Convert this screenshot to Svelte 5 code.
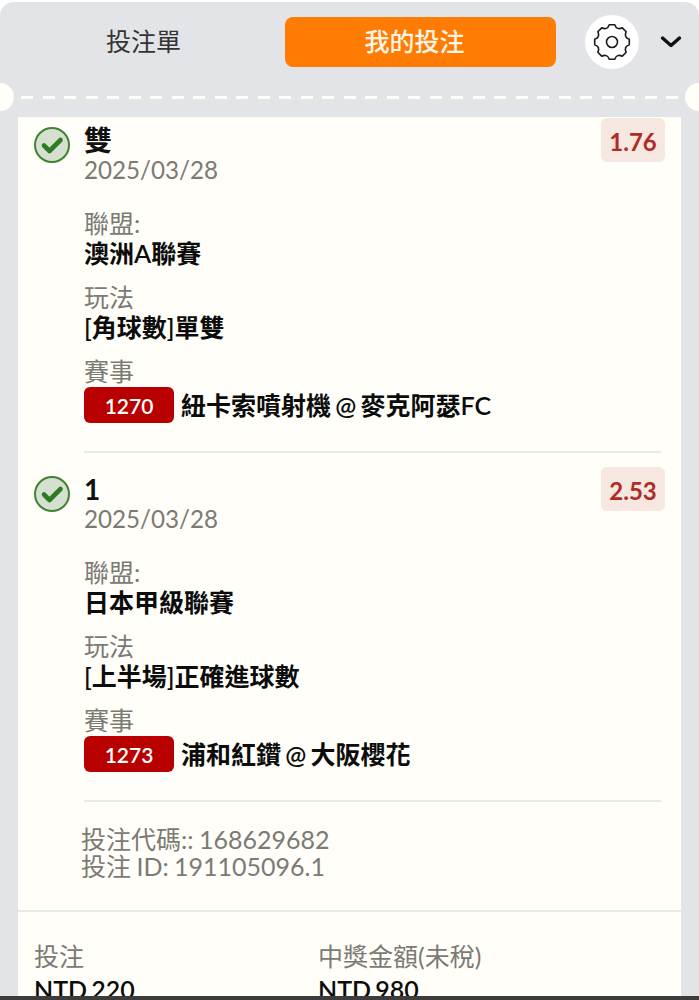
<script lang="ts">
    const bets = [
        { pick: '雙', date: '2025/03/28', odds: '1.76', league: '澳洲A聯賽', market: '[角球數]單雙', code: '1270', match: '紐卡索噴射機 @ 麥克阿瑟FC' },
        { pick: '1', date: '2025/03/28', odds: '2.53', league: '日本甲級聯賽', market: '[上半場]正確進球數', code: '1273', match: '浦和紅鑽 @ 大阪櫻花' }
    ];

    // 8-tooth gear outline, teeth joined by scooped valleys
    function gearPath(cx: number, cy: number, outer: number, valley: number): string {
        const pt = (deg: number, r: number) => {
            const a = (deg * Math.PI) / 180;
            return `${(cx + r * Math.cos(a)).toFixed(2)} ${(cy + r * Math.sin(a)).toFixed(2)}`;
        };
        let d = `M${pt(-9, outer)}`;
        for (let i = 0; i < 8; i++) {
            const a = i * 45;
            d += ` L${pt(a + 9, outer)} Q${pt(a + 22.5, valley)} ${pt(a + 36, outer)}`;
        }
        return d + 'Z';
    }

    const gear = gearPath(22, 22, 17.5, 12.5);
</script>

<div class="slip">
    <header class="tabs">
        <button class="tab">投注單</button>
        <button class="tab active">我的投注</button>
        <span class="gear">
            <svg viewBox="0 0 44 44" width="44" height="44" fill="none" stroke="#1c1c1c" stroke-width="1.6" stroke-linecap="round" stroke-linejoin="round">
                <path d={gear} />
                <circle cx="22" cy="22" r="5.500" />
            </svg>
        </span>
        <svg class="chevron" viewBox="0 0 22 14" width="22" height="14" fill="none" stroke="#111" stroke-width="3.400" stroke-linecap="round" stroke-linejoin="round">
            <path d="M2.500 3 11 10.500 19.500 3" />
        </svg>
    </header>

    <div class="perforation">
        <span class="notch left"></span>
        <span class="notch right"></span>
    </div>

    <main class="ticket">
        {#each bets as bet}
            <section class="bet">
                <span class="check">
                    <svg viewBox="0 0 36 36" width="36" height="36">
                        <circle cx="18" cy="18" r="17" fill="#d6e0d1" stroke="#3f8232" stroke-width="2" />
                        <path d="M10 18.500 15.500 24 26.500 13" fill="none" stroke="#2f7a24" stroke-width="4.600" stroke-linecap="round" stroke-linejoin="round" />
                    </svg>
                </span>
                <div class="bet-body">
                    <div class="bet-top">
                        <div>
                            <div class="pick">{bet.pick}</div>
                            <div class="date">{bet.date}</div>
                        </div>
                        <span class="odds">{bet.odds}</span>
                    </div>
                    <div class="field first">
                        <div class="muted">聯盟:</div>
                        <div class="value">{bet.league}</div>
                    </div>
                    <div class="field">
                        <div class="muted">玩法</div>
                        <div class="value">{bet.market}</div>
                    </div>
                    <div class="field">
                        <div class="muted">賽事</div>
                        <div class="match">
                            <span class="code">{bet.code}</span>
                            <span class="value">{bet.match}</span>
                        </div>
                    </div>
                </div>
            </section>
        {/each}

        <div class="ids">
            <div>投注代碼:: 168629682</div>
            <div>投注 ID: 191105096.1</div>
        </div>

        <div class="totals">
            <div>
                <div class="muted">投注</div>
                <div class="value">NTD 220</div>
            </div>
            <div>
                <div class="muted">中獎金額(未稅)</div>
                <div class="value">NTD 980</div>
            </div>
        </div>
    </main>
</div>
<div class="home-bar"></div>

<style>
    :global(body) {
        margin: 0;
        background: #fff;
    }

    .slip {
        height: 994px;
        margin-top: 2px;
        overflow: hidden;
        background: #e2e4e7;
        border-radius: 14px 14px 0 0;
        font-family: Lato, "Noto Sans CJK TC", sans-serif;
    }

    .tabs {
        display: flex;
        align-items: center;
        height: 80px;
        padding: 0 15px 0 18px;
    }

    .tab {
        width: 251px;
        height: 50px;
        margin-right: 16px;
        padding: 0 0 4px;
        border: 0;
        border-radius: 8px;
        background: transparent;
        color: #333;
        font: inherit;
        font-size: 25px;
    }

    .tab.active {
        width: 271px;
        margin-right: 29px;
        padding-right: 12px;
        background: #ff7c04;
        color: #fff6e8;
        font-weight: 500;
    }

    .gear {
        display: flex;
        align-items: center;
        justify-content: center;
        width: 54px;
        height: 54px;
        border-radius: 50%;
        background: #fff;
    }

    .chevron {
        margin-left: 21px;
    }

    .perforation {
        position: relative;
        height: 35px;
        box-sizing: border-box;
        margin: 0 18px;
        padding-top: 14px;
        background-image: repeating-linear-gradient(90deg, #fffef8 0 12px, transparent 12px 21.5px);
        background-size: 100% 3px;
        background-position: 3px 14px;
        background-repeat: no-repeat;
    }

    .notch {
        position: absolute;
        top: 1px;
        width: 28px;
        height: 28px;
        border-radius: 50%;
        background: #fffef8;
    }

    .notch.left {
        left: -32px;
    }

    .notch.right {
        right: -32px;
    }

    .ticket {
        margin: 0 18px;
        height: 879px;
        overflow: hidden;
        background: #fffef8;
    }

    .bet {
        display: flex;
        height: 349px;
        box-sizing: border-box;
        padding: 1px 20px 0 16px;
    }

    .check {
        flex: none;
        width: 36px;
        height: 36px;
        margin-top: 9px;
        margin-right: 14px;
    }

    .bet-body {
        flex: 1;
        height: 335px;
        box-sizing: border-box;
        border-bottom: 2px solid #ebe9e2;
    }

    .bet-top {
        display: flex;
        justify-content: space-between;
    }

    .pick {
        height: 32px;
        color: #111;
        font-size: 28px;
        font-weight: 700;
        line-height: 44px;
    }

    .date {
        margin-top: 5px;
        color: #7c7a74;
        font-size: 24.2px;
        line-height: 30px;
    }

    .muted {
        color: #7c7a74;
        font-size: 25px;
        line-height: 30px;
    }

    .odds {
        box-sizing: border-box;
        width: 64px;
        height: 44px;
        margin-right: -4px;
        border-radius: 6px;
        background: #f6e7e0;
        color: #b02a26;
        font-size: 24px;
        font-weight: 700;
        line-height: 48px;
        text-align: center;
    }

    .field {
        margin-top: 13px;
    }

    .field.first {
        margin-top: 23px;
    }

    .value {
        color: #0c0c0c;
        font-size: 25px;
        font-weight: 600;
        line-height: 31px;
        word-spacing: -2px;
    }

    .match {
        display: flex;
        align-items: center;
        gap: 7px;
        margin-top: 1px;
    }

    .code {
        width: 90px;
        height: 36px;
        border-radius: 6px;
        background: #b80000;
        color: #fff;
        font-size: 21px;
        font-weight: 600;
        line-height: 37px;
        text-align: center;
    }

    .ids {
        margin-top: 11px;
        padding-left: 63px;
        height: 84px;
        color: #7c7a74;
        font-size: 25px;
        line-height: 27px;
        word-spacing: -1px;
    }

    .totals {
        display: grid;
        grid-template-columns: 284px 1fr;
        padding: 29px 16px 0;
        border-top: 2px solid #ebe9e2;
    }

    .totals .value {
        line-height: 37px;
    }

    .home-bar {
        height: 4px;
        background: #3c3c3c;
    }
</style>
